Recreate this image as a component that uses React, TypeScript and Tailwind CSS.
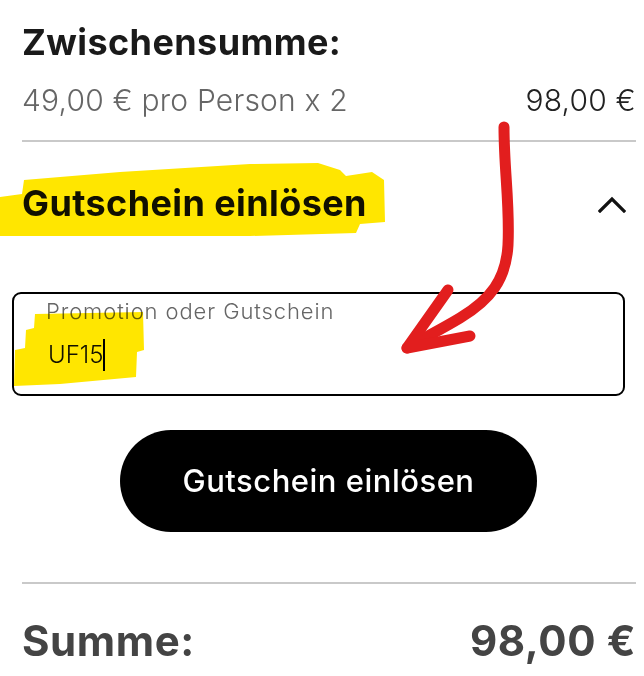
import React from 'react';

function ChevronUp() {
  return (
    <svg width="28" height="17" viewBox="0 0 28 17" fill="none">
      <path d="M2 15 L14 3 L26 15" stroke="#111" strokeWidth="3.2" strokeLinecap="square" />
    </svg>
  );
}

// hand-drawn annotations that sit over the screenshot
function Annotations() {
  return (
    <svg className="absolute inset-0 pointer-events-none" width="644" height="676" viewBox="0 0 644 676">
      <g style={{ mixBlendMode: 'multiply' }} fill="#ffe600">
        <path d="M0 197 L22 194 L24 180 L120 172 L250 164 L318 163 L340 170 L346 176 L372 172 L384 180 L385 222 L360 224 L356 233 L250 236 L100 236 L0 236 Z" />
        <path d="M35 314 L143 312 L144 350 L137 352 L136 377 L60 384 L14 386 L15 350 L25 348 L26 330 L34 328 Z" />
      </g>
      <g stroke="#e21e1e" strokeWidth="11" strokeLinecap="round" strokeLinejoin="round" fill="none">
        <path d="M504 127 C504 170 510 205 508 245 C506 280 490 300 460 318 C440 330 420 340 407 348" />
        <path d="M448 290 L407 348 L470 336" />
      </g>
    </svg>
  );
}

export default function App() {
  return (
    <div className="relative w-[644px] h-[676px] bg-white overflow-hidden" style={{ fontFamily: 'Inter, "Noto Sans", sans-serif' }}>
      <div className="pl-[22px] pr-[8px] pt-[20px]">
        <h2 className="text-[36px] leading-[44px] font-bold text-[#1a1a1a] tracking-[0.4px]">Zwischensumme:</h2>
        <div className="mt-[17px] flex justify-between text-[30px] leading-[38px] font-light tracking-[0.2px]">
          <span className="text-[#666]">49,00 € pro Person x 2</span>
          <span className="text-[#222]">98,00 €</span>
        </div>
        <div className="mt-[21px] h-[2px] bg-[#c9c9c9]" />
        <div className="mt-[39px] h-[44px] flex items-center justify-between">
          <h3 className="text-[36px] leading-[44px] font-bold text-[#111] tracking-[0.4px]">Gutschein einlösen</h3>
          <div className="mr-[10px] mt-[2px]"><ChevronUp /></div>
        </div>
      </div>

      <div className="ml-[12px] mt-[67px] w-[613px] h-[104px] border-2 border-black rounded-[9px] pl-[32px] pt-[3px]">
        <div className="text-[22px] leading-[28px] font-light text-[#666] tracking-[0.9px]">Promotion oder Gutschein</div>
        <div className="mt-[14px] flex items-center text-[24px] leading-[32px] font-light text-[#111]">
          <span className="pl-[2px]">UF15</span>
          <span className="w-[1.5px] h-[32px] bg-black" />
        </div>
      </div>

      <div className="ml-[120px] mt-[34px] w-[417px] h-[102px] rounded-full bg-black flex items-center justify-center">
        <span className="text-[31px] font-medium text-white tracking-[0.5px]">Gutschein einlösen</span>
      </div>

      <div className="ml-[22px] mr-[8px] mt-[50px] h-[2px] bg-[#c9c9c9]" />

      <div className="pl-[22px] pr-[8px] mt-[33px] h-[48px] flex justify-between items-center text-[42px] leading-[48px] font-bold text-[#444] tracking-[0.6px]">
        <span>Summe:</span>
        <span>98,00 €</span>
      </div>

      <Annotations />
    </div>
  );
}
